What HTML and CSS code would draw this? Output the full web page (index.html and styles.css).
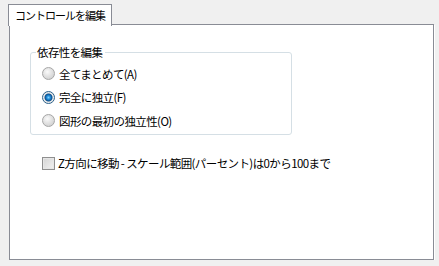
FILE: index.html
```html
<!DOCTYPE html>
<html lang="ja">
<head>
    <meta charset="UTF-8">
    <title>コントロールを編集</title>
    <link rel="stylesheet" href="styles.css">
</head>
<body>
    <div class="tabs">
        <div class="tab">コントロールを編集</div>
    </div>
    <div class="panel">
        <fieldset class="group">
            <legend>依存性を編集</legend>
            <div class="option"><span class="radio"></span>全てまとめて(A)</div>
            <div class="option"><span class="radio checked"></span>完全に独立(F)</div>
            <div class="option"><span class="radio"></span>図形の最初の独立性(O)</div>
        </fieldset>
        <div class="check-row">
            <span class="checkbox"></span>Z方向に移動 - スケール範囲(パーセント)は0から100まで
        </div>
    </div>
</body>
</html>
```
FILE: styles.css
```css
body {
    margin: 0;
    background-color: #f0f0f0;
    font-family: "Noto Sans CJK JP", sans-serif;
    font-size: 11.5px;
    letter-spacing: -0.6px;
    color: #000;
    white-space: nowrap;
}

.tabs {
    padding: 4px 0 0 8px;
    height: 20px;
}

.tab {
    position: relative;
    z-index: 1;
    width: 96px;
    height: 21px;
    padding-left: 6px;
    font-size: 11px;
    letter-spacing: -1px;
    line-height: 21px;
    background-color: #fff;
    border: 1px solid #898c95;
    border-bottom: none;
}

.panel {
    margin-left: 9px;
    width: 423px;
    height: 234px;
    background-color: #fff;
    border: 1px solid #898c95;
    box-shadow: 1px 1px 0 #fff;
}

.group {
    margin: 20px 0 0 20px;
    padding: 3px 0 0 11px;
    width: 262px;
    height: 90px;
    border: 1px solid #d5dfe5;
    border-radius: 3px;
    box-sizing: border-box;
}

.group legend {
    margin-left: -6px;
    padding: 0 3px 0 1px;
    line-height: 14px;
}

.option {
    display: flex;
    align-items: center;
    height: 23.5px;
}

.radio {
    width: 11px;
    height: 11px;
    margin-right: 4px;
    border: 1px solid #a6a6a6;
    border-radius: 50%;
    background: radial-gradient(circle at 40% 35%, #fafafa 0, #e2e2e2 45%, #c8c8c8 100%);
}

.radio.checked {
    border-color: #2c628b;
    background: radial-gradient(circle, #7ad0ff 0, #1c87d4 2px, #0d4f8b 3.5px, #e8e8e8 4.5px, #f6f6f6 100%);
}

.check-row {
    display: flex;
    align-items: center;
    margin: 21px 0 0 32px;
    height: 14px;
}

.checkbox {
    width: 11px;
    height: 11px;
    margin-right: 3px;
    border: 1px solid #8f8f8f;
    background: linear-gradient(135deg, #d4d4d4 0, #f2f2f2 100%);
    box-shadow: inset 0 0 0 1px #e6e6e6;
}
```
